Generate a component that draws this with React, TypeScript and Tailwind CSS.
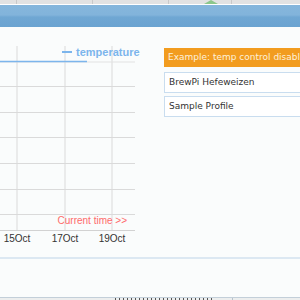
import React from "react";

const font = { fontFamily: '"Liberation Sans", Arial, sans-serif' };
const panelFont = { fontFamily: '"DejaVu Sans", Verdana, sans-serif' };

function Chart() {
  const hLines = [86, 112, 137, 163, 189, 214];
  const vLines = [17, 65, 112];
  const off = 27;
  return (
    <svg width="140" height="231" viewBox="0 0 140 231" style={font}>
      {vLines.map((x) => (
        <line key={x} x1={x} x2={x} y1={46 - off} y2={230 - off} stroke="#e6e6e6" strokeWidth="1.6" />
      ))}
      <line x1={0} x2={135} y1={62 - off} y2={62 - off} stroke="#e2e2e2" strokeWidth="1" />
      {hLines.map((y) => (
        <line key={y} x1={0} x2={135} y1={y - off + 0.5} y2={y - off + 0.5} stroke="#dadada" strokeWidth="1" />
      ))}
      <line x1={0} x2={135} y1={230.5 - off} y2={230.5 - off} stroke="#d2d2d2" strokeWidth="1" />
      <line x1={0} x2={87} y1={61.5 - off} y2={61.5 - off} stroke="#7cb5ec" strokeWidth="1.6" />
      <line x1={62} x2={72} y1={52 - off} y2={52 - off} stroke="#7cb5ec" strokeWidth="2" />
      <text x={76} y={56 - off} fill="#7cb5ec" fontSize="11" fontWeight="bold">temperature</text>
      <text x={127} y={223.5 - off} fill="#ff6b6b" fontSize="10" textAnchor="end">Current time &gt;&gt;</text>
      {[
        [17, "15Oct"],
        [65, "17Oct"],
        [112, "19Oct"],
      ].map(([x, t]) => (
        <text key={t as string} x={x as number} y={241.5 - off} fill="#333333" fontSize="10" textAnchor="middle">
          {t}
        </text>
      ))}
    </svg>
  );
}

export default function App() {
  return (
    <div className="w-[300px] h-[300px] overflow-hidden bg-[#fafcfc] flex flex-col" style={font}>
      <div className="h-[4px] bg-[#e2e2e2] flex shrink-0">
        <div className="w-[17px] border-r border-[#c9c9c9]" />
        <div className="w-[76px] border-r border-[#c9c9c9]" />
        <div className="w-[76px] border-r border-[#c9c9c9]" />
        <div className="w-[63px] border-r border-[#c9c9c9] relative">
          <div className="absolute left-[35px] top-0 w-0 h-0 border-l-[7px] border-r-[7px] border-b-[4px] border-l-transparent border-r-transparent border-b-[#8cc78c]" />
        </div>
        <div className="flex-1" />
      </div>
      <div className="h-[1px] bg-white shrink-0" />
      <div className="h-[22px] shrink-0 bg-[linear-gradient(to_bottom,#85b6dc_0%,#82b4db_45%,#6fa7d3_55%,#6aa3d1_100%)]" />
      <div className="flex h-[230px] shrink-0">
        <div className="w-[140px] shrink-0">
          <Chart />
        </div>
        <div className="flex-1 pl-[24px] pt-[21px] flex flex-col min-w-0 overflow-hidden" style={panelFont}>
          <div className="h-[19px] w-[200px] bg-[#f29c1f] text-[#fdf1dc] text-[9px] leading-[19px] pl-[4px] whitespace-nowrap">
            Example: temp control disabled
          </div>
          <div className="mt-[5px] h-[21px] w-[200px] border border-[#c9ddef] bg-white text-[#333] text-[9px] leading-[19px] pl-[4px] whitespace-nowrap">
            BrewPi Hefeweizen
          </div>
          <div className="mt-[3px] h-[21px] w-[200px] border border-[#c9ddef] bg-white text-[#333] text-[9px] leading-[19px] pl-[4px] whitespace-nowrap">
            Sample Profile
          </div>
        </div>
      </div>
      <div className="h-[2px] bg-[#dce8f2] shrink-0" />
      <div className="h-[38px] shrink-0" />
      <div className="h-[4px] shrink-0 bg-[#eceeee] border-t border-[#c3cfd9] flex">
        <div className="w-[115px]" />
        <div className="w-[118px] border-r border-[#b8c3cc] overflow-hidden">
          <div className="h-[2px] w-[100px] bg-[repeating-linear-gradient(to_right,#555_0px,#555_1px,transparent_1px,transparent_4px)]" />
        </div>
      </div>
    </div>
  );
}
